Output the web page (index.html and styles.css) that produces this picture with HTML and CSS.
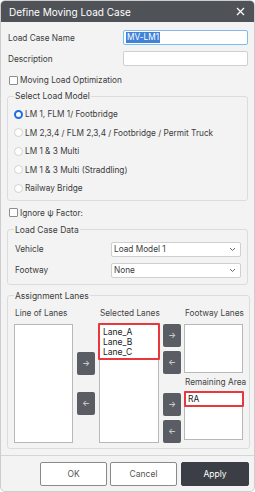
FILE: index.html
```html
<!DOCTYPE html>
<html>
<head>
<meta charset="utf-8">
<link rel="stylesheet" href="styles.css">
</head>
<body>
<div class="window">
  <div class="titlebar">
    <span class="title">Define Moving Load Case</span>
    <svg class="close" width="9" height="9" viewBox="0 0 9 9"><path d="M1 1L8 8M8 1L1 8" stroke="#fff" stroke-width="1.2"/></svg>
  </div>
  <div class="main">
    <div class="row first">
      <span class="lbl">Load Case Name</span>
      <div class="input focus"><span class="sel">MV-LM1</span></div>
    </div>
    <div class="row">
      <span class="lbl">Description</span>
      <div class="input"></div>
    </div>
    <div class="check opt"><span class="box"></span><span>Moving Load Optimization</span></div>

    <fieldset class="fs fs1">
      <legend>Select Load Model</legend>
      <div class="radio"><span class="dot on"></span><span>LM 1, FLM 1/ Footbridge</span></div>
      <div class="radio"><span class="dot"></span><span>LM 2,3,4 / FLM 2,3,4 / Footbridge / Permit Truck</span></div>
      <div class="radio"><span class="dot"></span><span>LM 1 &amp; 3 Multi</span></div>
      <div class="radio"><span class="dot"></span><span>LM 1 &amp; 3 Multi (Straddling)</span></div>
      <div class="radio"><span class="dot"></span><span>Railway Bridge</span></div>
    </fieldset>

    <div class="check ign"><span class="box"></span><span>Ignore ψ Factor:</span></div>

    <fieldset class="fs fs2">
      <legend>Load Case Data</legend>
      <div class="srow">
        <span class="lbl">Vehicle</span>
        <div class="select"><span>Load Model 1</span><svg width="7" height="5" viewBox="0 0 7 5"><path d="M1 1L3.5 3.5L6 1" fill="none" stroke="#666" stroke-width="1"/></svg></div>
      </div>
      <div class="srow second">
        <span class="lbl">Footway</span>
        <div class="select"><span>None</span><svg width="7" height="5" viewBox="0 0 7 5"><path d="M1 1L3.5 3.5L6 1" fill="none" stroke="#666" stroke-width="1"/></svg></div>
      </div>
    </fieldset>

    <fieldset class="fs fs3">
      <legend>Assignment Lanes</legend>
      <div class="lanes">
        <div class="col c1">
          <div class="clbl">Line of Lanes</div>
          <div class="list tall"></div>
        </div>
        <div class="btncol bc1">
          <div class="abtn">→</div>
          <div class="abtn gap">←</div>
        </div>
        <div class="col c3">
          <div class="clbl">Selected Lanes</div>
          <div class="list tall">
            <div class="redbox lanesel">
              <div>Lane_A</div>
              <div>Lane_B</div>
              <div>Lane_C</div>
            </div>
          </div>
        </div>
        <div class="btncol bc2">
          <div class="abtn">→</div>
          <div class="abtn g2">←</div>
          <div class="abtn g3">→</div>
          <div class="abtn g2">←</div>
        </div>
        <div class="col c5">
          <div class="clbl">Footway Lanes</div>
          <div class="list short"></div>
          <div class="clbl ra">Remaining Area</div>
          <div class="list short2">
            <div class="redbox rasel">RA</div>
          </div>
        </div>
      </div>
    </fieldset>
  </div>
  <div class="footer">
    <div class="btn">OK</div>
    <div class="btn">Cancel</div>
    <div class="btn primary">Apply</div>
  </div>
</div>
</body>
</html>
```

FILE: styles.css
```css
html, body {
  margin: 0;
  padding: 0;
  background: #ffffff;
}
body {
  font-family: Inter, "Noto Sans", sans-serif;
  font-size: 8.25px;
  color: #3c3c3c;
}
.window {
  width: 255px;
  height: 492px;
  box-sizing: border-box;
  background: #f3f3f3;
  border: 1px solid #cdcdcd;
  border-radius: 5px;
  overflow: hidden;
  display: flex;
  flex-direction: column;
}
.titlebar {
  height: 21px;
  background: #4f5358;
  color: #fff;
  display: flex;
  align-items: center;
  justify-content: space-between;
  padding: 0 9px 0 8px;
  flex: none;
}
.title {
  font-size: 10px;
}
.main {
  padding: 8px 6px 0 6px;
}
.row {
  display: flex;
  align-items: center;
  height: 15px;
  padding-left: 1px;
}
.row + .row {
  margin-top: 6px;
}
.lbl {
  flex: 1;
}
.input {
  width: 121px;
  height: 13px;
  border: 1px solid #cfcfcf;
  border-radius: 2px;
  background: #fff;
  display: flex;
  align-items: center;
  padding-left: 2px;
  box-sizing: content-box;
}
.input.focus {
  border-color: #7dbcf0;
}
.sel {
  background: #3f82d8;
  color: #fff;
  line-height: 11px;
  padding: 0 1px;
}
.check {
  display: flex;
  align-items: center;
  height: 12px;
  padding-left: 2px;
  gap: 2px;
}
.opt {
  margin-top: 8px;
}
.ign {
  margin-top: 6px;
}
.box {
  width: 7px;
  height: 7px;
  border: 1px solid #8d8d8d;
  border-radius: 1px;
  background: #fff;
}
.fs {
  margin: 4px 0 0 0;
  border: 1px solid #dcdcdc;
  border-radius: 3px;
  padding: 0 6px 0 6px;
}
.fs legend {
  padding: 0 1px;
  line-height: 12px;
  font-size: 8.5px;
}
.fs1 {
  padding-top: 3px;
  padding-bottom: 2px;
}
.radio {
  display: flex;
  align-items: center;
  height: 18.5px;
  gap: 2px;
}
.dot {
  width: 7px;
  height: 7px;
  border: 1px solid #d2d2d2;
  border-radius: 50%;
  background: #fff;
}
.dot.on {
  width: 5px;
  height: 5px;
  border: 2px solid #1b6fe0;
}
.fs2 {
  margin-top: 5px;
  padding-top: 6px;
  padding-bottom: 6px;
}
.srow {
  display: flex;
  align-items: center;
  height: 15px;
  padding-left: 1px;
}
.srow.second {
  margin-top: 6px;
}
.select {
  width: 122px;
  height: 13px;
  border: 1px solid #cfcfcf;
  border-radius: 2px;
  background: #fff;
  display: flex;
  align-items: center;
  justify-content: space-between;
  padding: 0 4px 0 2px;
}
.fs3 {
  margin-top: 5px;
  padding-top: 5px;
  padding-bottom: 5px;
}
.lanes {
  display: flex;
}
.col {
  width: 59px;
  display: flex;
  flex-direction: column;
}
.col.c3 {
  width: 60px;
}
.clbl {
  height: 12px;
  line-height: 12px;
  padding-left: 1px;
  white-space: nowrap;
  margin-bottom: 5px;
  color: #444;
}
.clbl.ra {
  margin-top: 3px;
  margin-bottom: 3px;
}
.list {
  box-sizing: border-box;
  border: 1px solid #b8b8b8;
  background: #fff;
}
.tall {
  height: 119px;
}
.short {
  height: 49px;
}
.short2 {
  height: 49px;
}
.btncol {
  width: 18px;
  margin: 0 4px;
  display: flex;
  flex-direction: column;
}
.bc1 {
  padding-top: 45px;
}
.bc2 {
  padding-top: 17px;
  margin-right: 3px;
}
.abtn {
  height: 23px;
  background: #5a5e64;
  border-radius: 2px;
  color: #e0e0e0;
  font-size: 8px;
  display: flex;
  align-items: center;
  justify-content: center;
}
.bc1 .gap {
  margin-top: 17px;
}
.bc2 .g2 {
  margin-top: 4px;
}
.bc2 .g3 {
  margin-top: 19px;
}
.redbox {
  border: 2px solid #e8383d;
  border-radius: 1px;
}
.lanesel {
  margin: -2px -2px 0 -2px;
  padding: 2px 2px 1px 3px;
  line-height: 10px;
  color: #222;
  font-size: 8.5px;
}
.rasel {
  margin: -1px -2px 0 -1px;
  height: 12px;
  line-height: 12px;
  padding-left: 2px;
  color: #222;
  font-size: 8.5px;
}
.footer {
  margin-top: 6px;
  border-top: 1px solid #d6d6d6;
  padding: 6px 5px 0 0;
  display: flex;
  justify-content: flex-end;
  gap: 3px;
}
.btn {
  width: 67px;
  height: 24px;
  box-sizing: border-box;
  border: 1px solid #8a8a8a;
  border-radius: 2px;
  background: #fff;
  display: flex;
  align-items: center;
  justify-content: center;
  color: #555;
  font-size: 8.5px;
}
.btn.primary {
  margin-left: 1px;
  width: 68px;
  background: #3b3f45;
  border-color: #3b3f45;
  color: #fff;
}
```
